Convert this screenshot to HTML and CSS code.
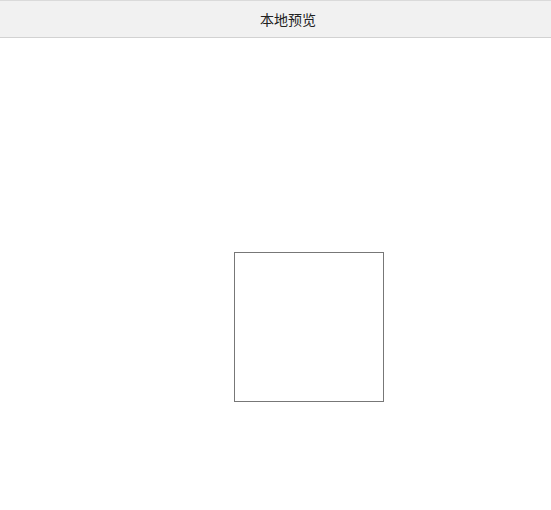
FILE: index.html
```html
<!DOCTYPE html>
<html lang="zh">
<head>
<meta charset="utf-8">
<link rel="stylesheet" href="styles.css">
</head>
<body>
<header class="bar">本地预览</header>
<main class="stage">
  <div class="frame"></div>
</main>
</body>
</html>
```
FILE: styles.css
```css
html, body { margin: 0; padding: 0; background: #fff; }
body { font-family: "Noto Sans CJK SC", "Liberation Sans", sans-serif; }
.bar {
  height: 36px;
  border-top: 1px solid #dadada;
  border-bottom: 1px solid #d2d2d2;
  background: #f1f1f1;
  color: #222;
  font-size: 14px;
  display: flex;
  align-items: center;
  justify-content: center;
  padding-left: 25px;
}
.stage {
  padding-top: 214px;
  padding-left: 234px;
}
.frame {
  width: 148px;
  height: 148px;
  border: 1px solid #777;
}
```
